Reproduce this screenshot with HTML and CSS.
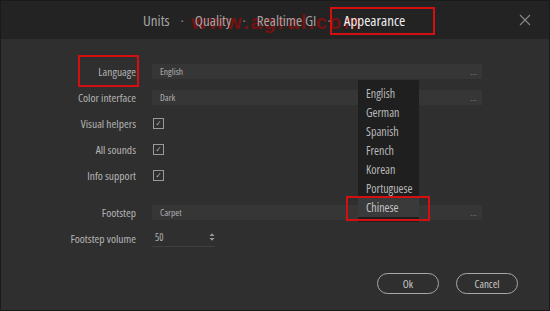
FILE: index.html
```html
<!DOCTYPE html>
<html lang="en">
<head>
    <meta charset="UTF-8">
    <meta name="viewport" content="width=device-width, initial-scale=1.0">
    <title>Settings - Appearance</title>
    <link rel="stylesheet" href="styles.css">
</head>
<body>
    <div class="dialog">
        <div class="topbar">
            <span class="watermark">www.agral.com</span>
            <div class="tabs">
                <span class="tab">Units</span>
                <span class="dot">·</span>
                <span class="tab">Quality</span>
                <span class="dot">·</span>
                <span class="tab">Realtime GI</span>
                <span class="dot">·</span>
                <span class="tab active">Appearance</span>
            </div>
            <button class="close" aria-label="Close">
                <svg width="12" height="12" viewBox="0 0 12 12">
                    <path d="M1 1 L11 11 M11 1 L1 11" stroke="#8a8a8a" stroke-width="1.1" fill="none"/>
                </svg>
            </button>
            <span class="mark mark-tab"></span>
        </div>

        <div class="form">
            <label class="label">Language</label>
            <div class="field"><span>English</span><span class="more">...</span></div>

            <label class="label">Color interface</label>
            <div class="field"><span>Dark</span><span class="more">...</span></div>

            <label class="label">Visual helpers</label>
            <div class="cell"><span class="check">✓</span></div>

            <label class="label">All sounds</label>
            <div class="cell"><span class="check">✓</span></div>

            <label class="label">Info support</label>
            <div class="cell"><span class="check">✓</span></div>

            <div class="spacer"></div>

            <label class="label">Footstep</label>
            <div class="field"><span>Carpet</span><span class="more">...</span></div>

            <label class="label">Footstep volume</label>
            <div class="cell">
                <div class="spin">
                    <span>50</span>
                    <svg width="6" height="10" viewBox="0 0 6 10">
                        <path d="M0.5 4 L3 1.2 L5.5 4 Z M0.5 6 L3 8.8 L5.5 6 Z" fill="#9a9a9a"/>
                    </svg>
                </div>
            </div>

            <span class="mark mark-label"></span>
        </div>

        <ul class="dropdown">
            <li>English</li>
            <li>German</li>
            <li>Spanish</li>
            <li>French</li>
            <li>Korean</li>
            <li>Portuguese</li>
            <li class="selected">Chinese</li>
        </ul>
        <span class="mark mark-option"></span>

        <div class="footer">
            <button class="btn">Ok</button>
            <button class="btn">Cancel</button>
        </div>
    </div>
</body>
</html>
```

FILE: styles.css
```css
body {
    margin: 0;
    padding: 0;
    background: #1b1b1b;
    font-family: "Open Sans", sans-serif;
    font-stretch: 75%;
}
.dialog {
    position: relative;
    width: 548px;
    height: 309px;
    border: 1px solid #1a1a1a;
    background-color: #2f2f2f;
    display: flex;
    flex-direction: column;
    overflow: hidden;
}
.topbar {
    position: relative;
    height: 38px;
    background-color: #232323;
    display: flex;
    align-items: center;
}
.tabs {
    position: relative;
    display: flex;
    align-items: center;
    gap: 11px;
    margin-left: 142px;
    font-size: 15px;
}
.tab {
    color: #a4a4a4;
}
.tab.active {
    color: #efefef;
    margin-left: 2px;
}
.dot {
    color: #8a8a8a;
}
.close {
    margin-left: auto;
    margin-right: 18px;
    background: none;
    border: none;
    padding: 0;
    display: flex;
}
.watermark {
    position: absolute;
    left: 190px;
    top: 10px;
    color: #741212;
    font-family: "Liberation Sans", sans-serif;
    font-stretch: normal;
    font-weight: bold;
    font-size: 20px;
    letter-spacing: 2px;
}
.mark {
    position: absolute;
    border: 2px solid #d40f0f;
    box-sizing: border-box;
}
.mark-tab {
    left: 329px;
    top: 6px;
    width: 105px;
    height: 28px;
}
.form {
    position: relative;
    display: grid;
    grid-template-columns: 135px 330px;
    grid-template-rows: repeat(5, 26px) 11px 26px 26px;
    column-gap: 16px;
    padding-top: 19px;
    font-size: 11.5px;
}
.label {
    color: #b4b4b4;
    text-align: right;
    align-self: center;
}
.spacer {
    grid-column: 1 / 3;
}
.field {
    align-self: center;
    height: 15px;
    background-color: #363636;
    display: flex;
    align-items: center;
    justify-content: space-between;
    padding: 0 5px 0 8px;
    font-size: 9.5px;
    color: #b0b0b0;
}
.more {
    color: #8a8a8a;
    font-size: 8px;
    letter-spacing: 0.5px;
}
.cell {
    display: flex;
    align-items: center;
}
.check {
    width: 9px;
    height: 9px;
    border: 1px solid #9a9a9a;
    margin-left: 1px;
    font-family: "DejaVu Sans", sans-serif;
    font-size: 8px;
    line-height: 9px;
    text-align: center;
    color: #bdbdbd;
}
.spin {
    width: 60px;
    display: flex;
    align-items: center;
    justify-content: space-between;
    border-bottom: 1px solid #3f3f3f;
    padding: 1px 0 2px 3px;
    font-size: 10px;
    color: #b0b0b0;
}
.mark-label {
    left: 77px;
    top: 16px;
    width: 61px;
    height: 32px;
}
.dropdown {
    position: absolute;
    left: 357px;
    top: 79px;
    width: 61px;
    margin: 0;
    padding: 4px 0 5px;
    list-style: none;
    background-color: #1f1f1f;
    font-size: 12px;
}
.dropdown li {
    height: 19px;
    line-height: 19px;
    padding-left: 8px;
    color: #b8b8b8;
}
.dropdown li.selected {
    background-color: #3a3a3a;
    color: #c4c4c4;
}
.mark-option {
    left: 345px;
    top: 195px;
    width: 84px;
    height: 25px;
}
.footer {
    margin-top: auto;
    display: flex;
    justify-content: flex-end;
    gap: 17px;
    padding: 0 31px 16px 0;
}
.btn {
    width: 62px;
    height: 21px;
    border: 1px solid #a8a8a8;
    border-radius: 11px;
    background: none;
    color: #c8c8c8;
    font-family: inherit;
    font-stretch: 75%;
    font-size: 11px;
    padding: 0;
}
```
